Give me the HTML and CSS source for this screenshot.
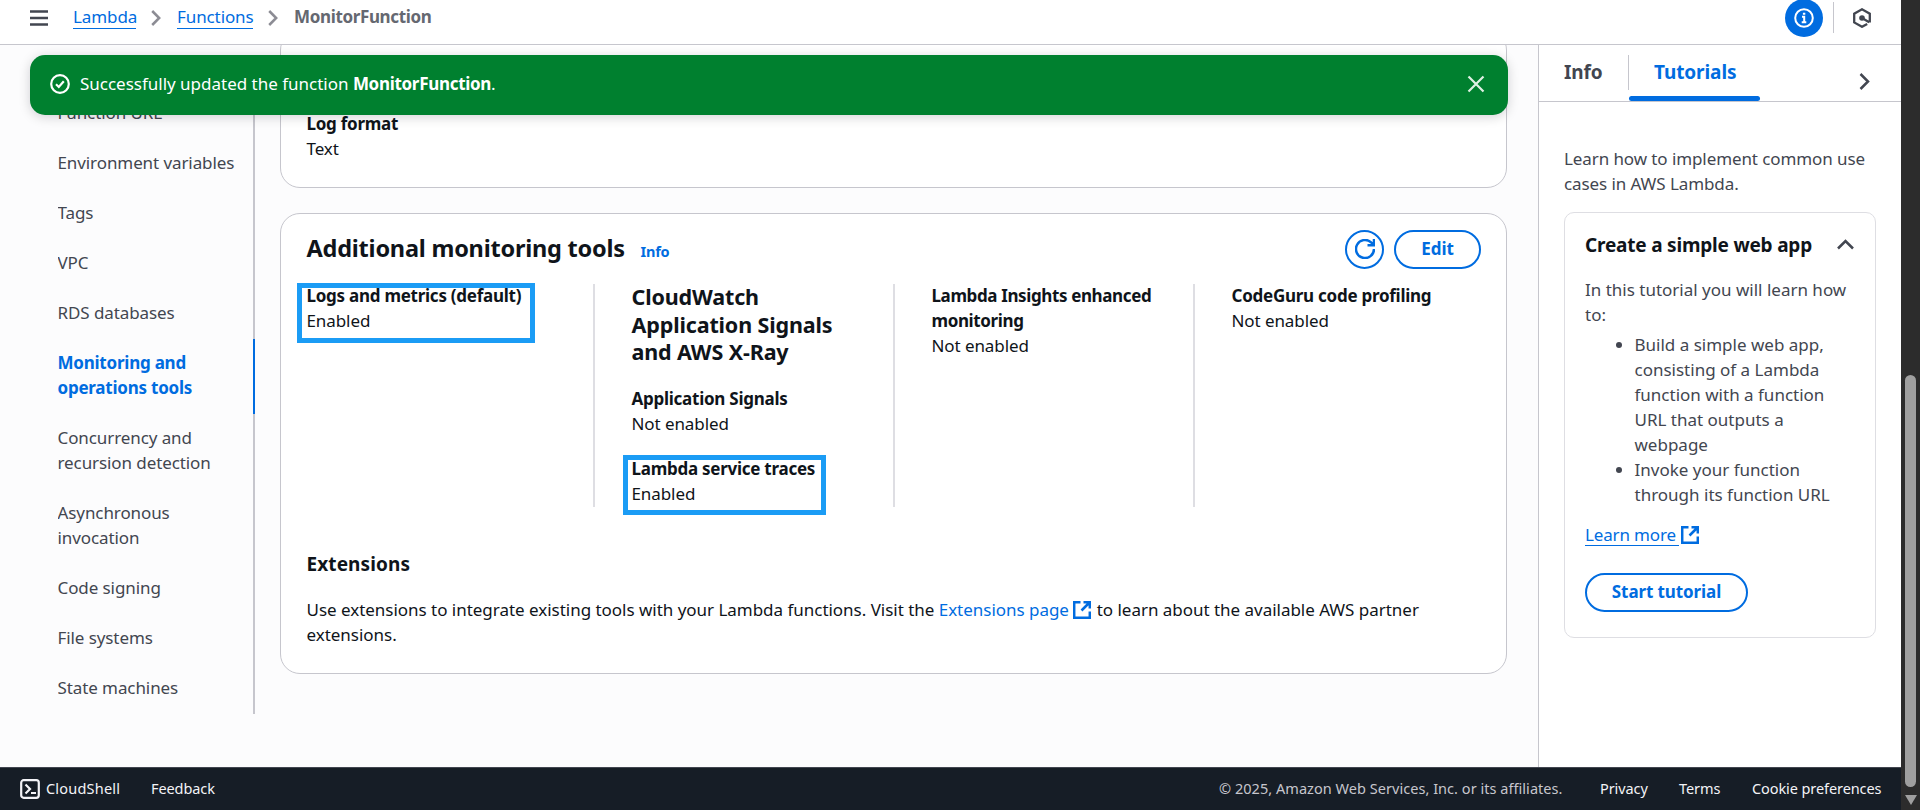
FILE: index.html
```html
<!DOCTYPE html>
<html lang="en">
<head>
<meta charset="utf-8">
<title>MonitorFunction - Lambda</title>
<link rel="stylesheet" href="styles.css">
</head>
<body>
<div class="window">
  <div class="app">
    <header class="topbar">
      <svg class="menu" width="18" height="16" viewBox="0 0 18 16"><path d="M0 1.5h18M0 8h18M0 14.5h18"/></svg>
      <nav class="crumbs">
        <a class="crumb c1" href="#">Lambda</a>
        <svg class="sep" width="10" height="16" viewBox="0 0 10 16"><path d="M1.2 1l7 7-7 7"/></svg>
        <a class="crumb c2" href="#">Functions</a>
        <svg class="sep" width="10" height="16" viewBox="0 0 10 16"><path d="M1.2 1l7 7-7 7"/></svg>
        <span class="current">MonitorFunction</span>
      </nav>
      <div class="tools">
        <span class="info-btn"><svg width="20" height="20" viewBox="0 0 20 20"><circle cx="10" cy="10" r="8.8"/><path d="M8 8.7h2.2v6M7.7 14.2h4.6M8.9 5.8h2.4"/></svg></span>
        <span class="rule"></span>
        <svg class="hex" width="20" height="20" viewBox="0 0 20 20"><path d="M17.8 14.4V5.7L10 1.3 2.2 5.7v8.7l7.8 4.4 5.2-2.9M10 10l7.2 4.2"/><circle cx="10" cy="10" r="2.8"/></svg>
      </div>
    </header>

    <div class="body">
      <main class="main">
        <nav class="side">
          <a>Function URL</a>
          <a>Environment variables</a>
          <a>Tags</a>
          <a>VPC</a>
          <a>RDS databases</a>
          <a class="active">Monitoring and operations tools</a>
          <a>Concurrency and recursion detection</a>
          <a>Asynchronous invocation</a>
          <a>Code signing</a>
          <a>File systems</a>
          <a>State machines</a>
        </nav>
        <div class="cards">
          <section class="card log">
            <div class="label">Log format</div>
            <div>Text</div>
          </section>
          <section class="card tools-card">
            <div class="card-head">
              <h2>Additional monitoring tools</h2>
              <a class="info-link">Info</a>
              <button class="btn round"><svg width="20" height="20" viewBox="0 0 20 20"><path d="M19 10a9 9 0 1 1-2.9-6.6L19 6M19 0v6.2h-6.5"/></svg></button>
              <button class="btn edit">Edit</button>
            </div>
            <div class="cols">
              <div class="col">
                <div class="field marked m1"><div class="label">Logs and metrics (default)</div><div>Enabled</div></div>
              </div>
              <div class="col">
                <h3>CloudWatch Application Signals and AWS X-Ray</h3>
                <div class="field"><div class="label">Application Signals</div><div>Not enabled</div></div>
                <div class="field marked m2"><div class="label">Lambda service traces</div><div>Enabled</div></div>
              </div>
              <div class="col">
                <div class="field"><div class="label tight">Lambda Insights enhanced monitoring</div><div>Not enabled</div></div>
              </div>
              <div class="col">
                <div class="field"><div class="label">CodeGuru code profiling</div><div>Not enabled</div></div>
              </div>
            </div>
            <h4>Extensions</h4>
            <p class="ext">Use extensions to integrate existing tools with your Lambda functions. Visit the <a>Extensions page <svg class="out" width="18" height="18" viewBox="0 0 18 18"><path d="M7.5 1.2H1.2v15.6h15.6v-6.3M10.5 1.2h6.3v6.3M16.5 1.5L8.5 9.5"/></svg></a> to learn about the available AWS partner extensions.</p>
          </section>
        </div>
        <div class="flash">
          <svg class="ok" width="20" height="20" viewBox="0 0 20 20"><circle cx="10" cy="10" r="8.8"/><path d="M6 10.3l2.8 2.7 5-5.8"/></svg>
          <span>Successfully updated the function <b>MonitorFunction</b>.</span>
          <svg class="close" width="18" height="18" viewBox="0 0 18 18"><path d="M1.5 1.5l15 15M16.5 1.5l-15 15"/></svg>
        </div>
      </main>

      <aside class="panel">
        <div class="tabs">
          <span class="tab t1">Info</span>
          <span class="tab t2">Tutorials</span>
          <svg class="collapse" width="11" height="17" viewBox="0 0 11 17"><path d="M1.5 1l7.5 7.5-7.5 7.5"/></svg>
        </div>
        <p class="lead">Learn how to implement common use cases in AWS Lambda.</p>
        <section class="tut">
          <div class="tut-head">
            <h4>Create a simple web app</h4>
            <svg width="17" height="11" viewBox="0 0 17 11"><path d="M1 9.5L8.5 2 16 9.5"/></svg>
          </div>
          <p>In this tutorial you will learn how to:</p>
          <ul>
            <li>Build a simple web app, consisting of a Lambda function with a function URL that outputs a webpage</li>
            <li>Invoke your function through its function URL</li>
          </ul>
          <div class="more"><a>Learn more</a><svg class="out" width="18" height="18" viewBox="0 0 18 18"><path d="M7.5 1.2H1.2v15.6h15.6v-6.3M10.5 1.2h6.3v6.3M16.5 1.5L8.5 9.5"/></svg></div>
          <button class="btn start">Start tutorial</button>
        </section>
      </aside>
    </div>

    <footer class="foot">
      <svg width="20" height="20" viewBox="0 0 20 20"><rect x="1.2" y="1.2" width="17.6" height="17.6" rx="2.5"/><path d="M5.5 5.5L10 10l-4.5 4.5M11 14H16"/></svg>
      <span class="shell">CloudShell</span>
      <span class="feedback">Feedback</span>
      <span class="copy">© 2025, Amazon Web Services, Inc. or its affiliates.</span>
      <span class="privacy">Privacy</span>
      <span class="terms">Terms</span>
      <span class="cookie">Cookie preferences</span>
    </footer>
  </div>
  <div class="scroll"><span class="thumb"></span><span class="arrow"></span></div>
</div>
</body>
</html>
```

FILE: styles.css
```css
*, *::before, *::after { box-sizing: border-box; margin: 0; padding: 0; }
body {
  width: 1920px; height: 810px; overflow: hidden; background: #fcfcfd;
  font: 17px/25px "Noto Sans", sans-serif; letter-spacing: -0.09px; color: #0f141a;
}
svg { display: block; fill: none; stroke: currentColor; stroke-width: 2.5; flex: none; }
.window { display: flex; height: 810px; }
.app { width: 1901px; display: flex; flex-direction: column; }

/* top bar */
.topbar { height: 45px; background: #fff; border-bottom: 1px solid #c6c6cd; display: flex; align-items: center; padding: 0 29px 9px 30px; color: #424650; flex: none; }
.crumbs { display: flex; align-items: center; margin-left: 25px; }
.crumb { color: #006ce0; text-decoration: none; border-bottom: 1px solid #006ce0; height: 23px; line-height: 21px; margin-top: -2px; margin-bottom: -1px; letter-spacing: -0.1px; }
.c1 { width: 63px; }
.c2 { width: 76px; }
.sep { margin: 0 16px 0 15px; color: #8c8c94; }
.current { color: #656871; font-weight: 700; letter-spacing: -0.35px; margin-top: -1px; margin-bottom: 1px; }
.tools { display: flex; align-items: center; margin-left: auto; }
.info-btn { width: 38px; height: 38px; border-radius: 50%; background: #006ce0; color: #fff; display: flex; align-items: center; justify-content: center; margin: -2px 0 -2px; }
.info-btn svg { stroke-width: 2; }
.rule { width: 1px; height: 31px; background: #c6c6cd; margin: 0 18px 0 10px; }
.hex { stroke-width: 2.3; }
.hex circle { fill: currentColor; stroke: none; }

.body { flex: 1; display: flex; min-height: 0; }
.main { width: 1538px; position: relative; display: flex; padding-left: 57.5px; overflow: hidden; }

/* section list */
.side { width: 197.5px; height: 669px; display: flex; flex-direction: column; justify-content: flex-end; overflow: hidden; color: #424650; flex: none; }
.side a { padding: 10.5px 12px 14.5px 0; border-right: 2px solid #c6c6cd; flex: none; }
.side .active { color: #006ce0; font-weight: 700; border-color: #006ce0; letter-spacing: -0.23px; }

/* cards */
.cards { margin: -15px 0 0 25px; width: 1227px; display: flex; flex-direction: column; gap: 25px; flex: none; }
.card { background: #fff; border: 1px solid #c6c6cd; border-radius: 20px; padding: 0 25px 0 25.5px; }
.log { height: 158px; padding-top: 80px; }
.label { font-weight: 700; letter-spacing: -0.26px; }
.tight { letter-spacing: -0.38px; }
.tools-card { height: 461px; }
.card-head { display: flex; align-items: center; height: 70px; }
h2 { font-size: 23.5px; line-height: 30px; width: 334px; white-space: nowrap; letter-spacing: -0.22px; margin-top: -2px; }
.info-link { font-size: 14.5px; font-weight: 700; color: #006ce0; padding-top: 4px; letter-spacing: -0.2px; }
.btn { height: 39px; border: 2px solid #006ce0; border-radius: 20px; background: #fff; color: #006ce0; font: 700 17px/25px "Noto Sans", sans-serif; letter-spacing: -0.1px; display: flex; align-items: center; justify-content: center; padding-bottom: 1px; }
.round { width: 39px; margin-left: auto; padding: 0; }
.edit { width: 87px; margin-left: 10px; }
.cols { display: grid; grid-template-columns: 286.5px 300px 300px 289px; height: 223px; }
.col { display: flex; flex-direction: column; gap: 20px; padding-right: 20px; }
.col > :first-child { margin-top: -1px; }
.col + .col { border-left: 2px solid #dedee3; padding-left: 36.5px; }
h3 { font-size: 21.5px; line-height: 27.5px; letter-spacing: -0.14px; }
.field { position: relative; }
.marked::after { content: ""; position: absolute; border: 5px solid #1b9cf5; height: 60px; }
.m1::after { left: -9.5px; top: 0; width: 238px; }
.m2::after { left: -8.5px; top: -0.5px; width: 203px; }
h4 { font-size: 19px; line-height: 25px; letter-spacing: -0.1px; }
.tools-card h4 { margin-top: 45px; letter-spacing: 0.1px; }
.ext { margin-top: 20px; letter-spacing: -0.025px; }
.ext a, .more { color: #006ce0; }
.ext .out { display: inline-block; vertical-align: -3px; margin-right: 1px; }

/* notification */
.flash { position: absolute; left: 30px; top: 10px; width: 1478px; height: 60px; border-radius: 15px; background: #00802f; color: #fff; display: flex; align-items: center; padding: 0 23px 2px 20px; box-shadow: 0 2px 12px rgba(0, 7, 22, .18); }
.flash span { margin-left: 10px; margin-top: -1px; letter-spacing: -0.01px; }
.flash b { letter-spacing: -0.3px; }
.ok { stroke-width: 2.2; }
.close { margin-left: auto; color: #dff0e4; stroke-width: 2.2; }

/* help panel */
.panel { flex: 1; background: #fff; border-left: 1px solid #c6c6cd; color: #424650; }
.tabs { display: flex; height: 57px; border-bottom: 1px solid #c6c6cd; padding-left: 25px; }
.tab { font-size: 19px; font-weight: 700; line-height: 54px; height: 57px; position: relative; }
.t1 { width: 65px; }
.t1::after { content: ""; position: absolute; right: 0; top: 10px; width: 1px; height: 35px; background: #c6c6cd; }
.t2 { width: 131px; padding-left: 25px; color: #006ce0; }
.t2::after { content: ""; position: absolute; left: 0; right: 0; bottom: 1px; height: 5px; border-radius: 3px; background: #006ce0; }
.collapse { margin: 28px 0 0 99px; }
.lead { margin: 44px 20px 16px 25px; }
.tut { margin-left: 25px; width: 312px; height: 426px; border: 1px solid #dedee3; border-radius: 10px; padding: 20px 20px 0; letter-spacing: 0; }
.tut-head { display: flex; align-items: center; justify-content: space-between; color: #0f141a; padding-right: 1px; margin-bottom: 19px; }
.tut-head h4 { letter-spacing: -0.2px; }
.tut-head svg { color: #424650; margin-top: -2px; }
ul { padding-left: 49.5px; margin-top: 5px; }
.more { display: flex; gap: 2px; margin-top: 16px; align-items: center; }
.more a { width: 94px; border-bottom: 1px solid #006ce0; height: 23px; line-height: 24px; letter-spacing: -0.15px; }
.start { width: 163px; margin-top: 27px; padding-bottom: 2px; }

/* footer */
.foot { height: 43px; background: #161d26; border-top: 1px solid #424650; display: flex; align-items: center; padding: 0 20px; font-size: 14.5px; color: #f3f3f7; flex: none; white-space: nowrap; }
.foot svg { stroke-width: 2.2; }
.foot span { margin-top: -2px; }
.foot .shell { margin-left: 6px; width: 105px; letter-spacing: 0.2px; }
.foot .copy { margin-left: auto; width: 381px; color: #c6c6cd; letter-spacing: 0.04px; }
.privacy { width: 79px; }
.terms { width: 73px; }
.cookie { width: 129px; }

/* scrollbar */
.scroll { width: 19px; background: #2c2c2c; display: flex; flex-direction: column; align-items: center; padding-top: 375px; }
.thumb { width: 11px; height: 412px; border-radius: 6px; background: #9f9f9f; }
.arrow { margin-top: 8px; border: 6px solid transparent; border-top: 10px solid #9f9f9f; border-bottom: 0; }
```
